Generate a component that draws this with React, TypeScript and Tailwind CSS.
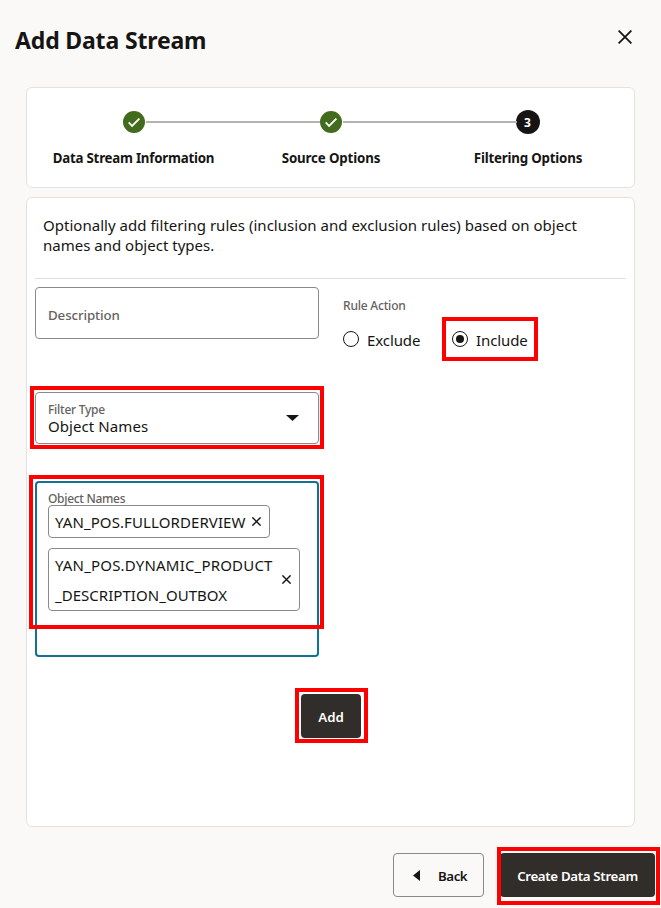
import React from "react";

const ink = "text-[#161513]";

function Highlight({ className }: { className: string }) {
  return (
    <span
      className={`pointer-events-none absolute border-4 border-[#fe0000] ${className}`}
    />
  );
}

function Cross({ size, stroke }: { size: number; stroke: number }) {
  return (
    <svg width={size} height={size} viewBox="0 0 14 14" className="block shrink-0">
      <path d="M0.6 0.6 13.4 13.4M13.4 0.6 0.6 13.4" stroke="#161513" strokeWidth={stroke} fill="none" />
    </svg>
  );
}

function DoneBadge() {
  return (
    <svg width="22" height="22" viewBox="0 0 22 22" className="block">
      <circle cx="11" cy="11" r="11" fill="#436b1d" />
      <path d="M5.7 11.4 9.1 15 16.4 7.6" stroke="#fff" strokeWidth="1.8" fill="none" />
    </svg>
  );
}

function Step({ label, className, children }: { label: string; className: string; children: React.ReactNode }) {
  return (
    <div className="flex w-[197px] flex-col items-center">
      <div className="flex h-6 items-center">{children}</div>
      <div className={`mt-[14px] whitespace-nowrap text-[13.3px] leading-5 font-bold ${className}`}>{label}</div>
    </div>
  );
}

export default function App() {
  return (
    <div className={`flex h-[908px] w-[661px] flex-col overflow-hidden bg-[#faf9f8] font-['Noto_Sans','Open_Sans',sans-serif] ${ink}`}>
      <header className="flex h-[87px] items-start justify-between pl-[15px] pr-[29px]">
        <h1 className="mt-[24px] whitespace-nowrap text-[23px] leading-8 font-bold tracking-[-0.16px]">Add Data Stream</h1>
        <button className="mt-[30px]" aria-label="Close">
          <Cross size={14} stroke={1.8} />
        </button>
      </header>

      <section className="mx-[26px] h-[101px] w-[609px] shrink-0 rounded-md border border-[#e3e2e1] bg-white pt-[22px]">
        <div className="relative ml-[8px] flex">
          <span className="absolute left-[111px] top-[11px] h-[2px] w-[174px] bg-[#b4b3b2]" />
          <span className="absolute left-[308px] top-[11px] h-[2px] w-[174px] bg-[#b4b3b2]" />
          <Step label="Data Stream Information" className="tracking-[-0.24px]"><DoneBadge /></Step>
          <Step label="Source Options" className="pl-px tracking-[-0.14px]"><DoneBadge /></Step>
          <Step label="Filtering Options" className="pl-px tracking-[-0.2px]">
            <span className="flex size-6 items-center justify-center rounded-full bg-[#161513] pt-px text-xs font-bold text-white">3</span>
          </Step>
        </div>
      </section>

      <section className="mx-[26px] mt-[9px] flex h-[630px] w-[609px] shrink-0 flex-col rounded-md border border-[#e3e2e1] bg-white px-2">
        <p className="h-[81px] shrink-0 whitespace-nowrap border-b border-[#e0dfde] pl-2 pt-[17px] text-[15px] leading-5">
          <span className="tracking-[0.025px]">Optionally add filtering rules (inclusion and exclusion rules) based on object</span>
          <br />
          names and object types.
        </p>

        <div className="mt-[8px] flex h-[105px] shrink-0">
          <div className="flex h-[52px] w-[284px] items-center rounded border border-[#8b8987] pl-3 pt-[5px] text-[13.3px] font-medium tracking-[-0.1px] text-[#65625f]">
            Description
          </div>
          <div className="ml-6">
            <div className="mt-[10px] text-xs leading-[18px] font-medium tracking-[-0.2px] text-[#65625f]">Rule Action</div>
            <div className="mt-[15px] flex h-5 items-center text-[15px] tracking-[-0.1px]">
              <span className="mb-[2px] size-4 rounded-full border-[1.5px] border-[#161513]" />
              <span className="ml-2 w-[85px] pt-px">Exclude</span>
              <div className="relative flex items-center">
                <span className="mb-[2px] flex size-4 items-center justify-center rounded-full border-[1.5px] border-[#161513]">
                  <span className="size-2 rounded-full bg-[#161513]" />
                </span>
                <span className="ml-2 pt-px">Include</span>
                <Highlight className="-left-[10px] -top-[11px] h-[44px] w-[96px]" />
              </div>
            </div>
          </div>
        </div>

        <div className="relative flex h-[52px] w-[284px] shrink-0 items-center justify-between rounded border border-[#8b8987] pl-3 pr-[19px]">
          <div className="pb-px">
            <div className="text-[12px] leading-[17px] font-medium tracking-[-0.25px] text-[#65625f]">Filter Type</div>
            <div className="text-[15px] leading-[17px] tracking-[0.08px]">Object Names</div>
          </div>
          <svg width="13" height="6" viewBox="0 0 13 6"><path d="M0 0H13L6.5 6Z" fill="#161513" /></svg>
          <Highlight className="-left-[6px] -top-[7px] h-[63px] w-[294px]" />
        </div>

        <div className="relative mt-[37px] h-[176px] w-[284px] shrink-0 rounded border-2 border-[#0f7396] pl-[11px] pt-[8px]">
          <div className="text-[12px] leading-[15px] font-medium tracking-[-0.3px] text-[#65625f]">Object Names</div>
          <div className="-mt-px flex h-[33px] w-[222px] items-center justify-between rounded border border-[#8b8987] pl-[6px] pr-2 text-[15px]">
            <span className="pt-px tracking-[0.1px]">YAN_POS.FULLORDERVIEW</span>
            <Cross size={9} stroke={2.2} />
          </div>
          <div className="mt-[10px] flex h-[63px] w-[252px] items-center justify-between rounded border border-[#8b8987] pl-[6px] pr-2 text-[15px] leading-[30px]">
            <span className="whitespace-nowrap tracking-[0.19px]">
              YAN_POS.DYNAMIC_PRODUCT<br /><span className="tracking-[0.04px]">_DESCRIPTION_OUTBOX</span>
            </span>
            <Cross size={9} stroke={2.2} />
          </div>
          <Highlight className="-left-[8px] -top-[8px] h-[154px] w-[295px]" />
        </div>

        <div className="mt-[37px] flex justify-center pl-px">
          <button className="relative h-[44px] w-[60px] rounded bg-[#312d2a] pt-[3px] text-[13.3px] font-semibold text-white">
            Add
            <Highlight className="-left-[6px] -top-[6px] h-[55px] w-[73px]" />
          </button>
        </div>
      </section>

      <footer className="mt-[26px] flex">
        <button className="ml-[393px] flex h-[44px] w-[91px] items-center rounded border border-[#8b8987] pl-[19px] text-[13.3px] font-semibold tracking-[-0.45px]">
          <svg width="7" height="11" viewBox="0 0 7 11"><path d="M7 0V11L0 5.5Z" fill="#161513" /></svg>
          <span className="ml-[18px] pt-[3px]">Back</span>
        </button>
        <button className="relative ml-4 h-[44px] w-[155px] whitespace-nowrap rounded bg-[#312d2a] pt-[3px] text-[13.3px] font-semibold tracking-[-0.34px] text-white">
          Create Data Stream
          <Highlight className="-left-[3px] -top-[6px] h-[58px] w-[163px]" />
        </button>
      </footer>
    </div>
  );
}
